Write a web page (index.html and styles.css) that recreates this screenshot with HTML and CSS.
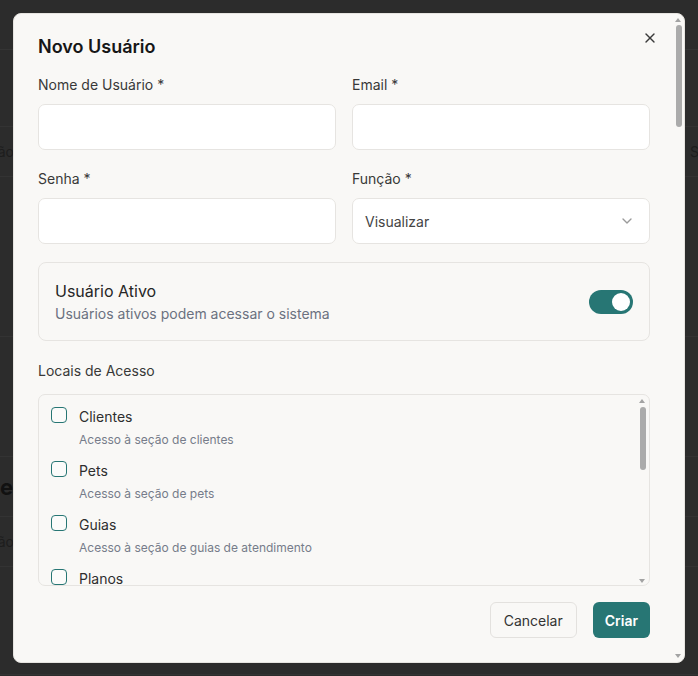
FILE: index.html
```html
<!DOCTYPE html>
<html lang="pt-BR">
<head>
<meta charset="utf-8">
<title>Novo Usuário</title>
<link rel="stylesheet" href="styles.css">
</head>
<body>
<div class="page">
  <div class="page-top"></div>
  <div class="page-row r1"></div>
  <div class="page-row r2"><span class="peek">Função</span><span class="peek-right">S</span></div>
  <div class="page-row r3"></div>
  <div class="page-row r4"></div>
  <div class="page-row r5"><span class="peek big">Controle</span></div>
  <div class="page-row r6"><span class="peek">Função</span></div>
  <div class="page-row r7"></div>
</div>
<div class="dialog" role="dialog" aria-labelledby="dlg-title">
  <div class="fake-scroll" aria-hidden="true">
    <span class="arrow up"></span>
    <span class="thumb dialog-thumb"></span>
    <span class="arrow down"></span>
  </div>
  <button class="close" aria-label="Fechar">
    <svg width="16" height="16" viewBox="0 0 24 24" fill="none" stroke="currentColor" stroke-width="2" stroke-linecap="round" stroke-linejoin="round"><path d="M18 6 6 18"/><path d="m6 6 12 12"/></svg>
  </button>
  <h2 class="title" id="dlg-title">Novo Usuário</h2>
  <div class="grid">
    <div class="field">
      <label class="label">Nome de Usuário *</label>
      <input class="input" type="text">
    </div>
    <div class="field">
      <label class="label">Email *</label>
      <input class="input" type="email">
    </div>
    <div class="field">
      <label class="label">Senha *</label>
      <input class="input" type="password">
    </div>
    <div class="field">
      <label class="label">Função *</label>
      <div class="input select">
        <span>Visualizar</span>
        <svg class="chev" width="16" height="16" viewBox="0 0 24 24" fill="none" stroke="currentColor" stroke-width="2" stroke-linecap="round" stroke-linejoin="round"><path d="m6 9 6 6 6-6"/></svg>
      </div>
    </div>
  </div>
  <div class="switch-card">
    <div class="switch-text">
      <div class="switch-title">Usuário Ativo</div>
      <div class="switch-sub">Usuários ativos podem acessar o sistema</div>
    </div>
    <div class="switch"><span class="knob"></span></div>
  </div>
  <div class="section-label">Locais de Acesso</div>
  <div class="list-wrap">
    <div class="list">
      <div class="item"><span class="box"></span><div><div class="item-name">Clientes</div><div class="item-desc">Acesso à seção de clientes</div></div></div>
      <div class="item"><span class="box"></span><div><div class="item-name">Pets</div><div class="item-desc">Acesso à seção de pets</div></div></div>
      <div class="item"><span class="box"></span><div><div class="item-name">Guias</div><div class="item-desc">Acesso à seção de guias de atendimento</div></div></div>
      <div class="item"><span class="box"></span><div><div class="item-name">Planos</div><div class="item-desc">Acesso à seção de planos</div></div></div>
      <div class="item"><span class="box"></span><div><div class="item-name">Procedimentos</div><div class="item-desc">Acesso à seção de procedimentos</div></div></div>
      <div class="item"><span class="box"></span><div><div class="item-name">Financeiro</div><div class="item-desc">Acesso à seção financeira</div></div></div>
      <div class="item"><span class="box"></span><div><div class="item-name">Agenda</div><div class="item-desc">Acesso à agenda</div></div></div>
      <div class="item"><span class="box"></span><div><div class="item-name">Relatórios</div><div class="item-desc">Acesso à seção de relatórios</div></div></div>
      <div class="item"><span class="box"></span><div><div class="item-name">Usuários</div><div class="item-desc">Acesso à gestão de usuários</div></div></div>
      <div class="item"><span class="box"></span><div><div class="item-name">Configurações</div><div class="item-desc">Acesso às configurações do sistema</div></div></div>
    </div>
    <div class="fake-scroll list-scroll" aria-hidden="true">
      <span class="arrow up"></span>
      <span class="thumb list-thumb"></span>
      <span class="arrow down"></span>
    </div>
  </div>
  <div class="footer">
    <button class="btn btn-outline">Cancelar</button>
    <button class="btn btn-primary">Criar</button>
  </div>
</div>
</body>
</html>
```
FILE: styles.css
```css
* { box-sizing: border-box; }
html, body { margin: 0; height: 100%; }
body {
  background: #2c2c2c;
  font-family: "Inter", "Noto Sans", sans-serif;
  overflow: hidden;
}

/* background page (under the overlay) */
.page { width: 100%; }
.page-top { height: 50px; border-bottom: 1px solid #343434; }
.page-row { border-bottom: 1px solid #333333; display: flex; justify-content: space-between; align-items: center; overflow: hidden; }
.r1 { height: 77px; }
.r2 { height: 50px; }
.r3 { height: 160px; }
.r4 { height: 120px; }
.r5 { height: 60px; }
.r6 { height: 50px; }
.r7 { height: 108px; }
.peek { font-size: 14px; color: #1d1d1d; width: 14px; white-space: nowrap; overflow: hidden; direction: rtl; text-align: left; }
.peek.big { font-size: 22px; font-weight: 700; color: #111; width: 13px; }
.peek-right { font-size: 14px; color: #1d1d1d; width: 8px; overflow: hidden; }

/* dialog */
.dialog {
  position: fixed;
  top: 13px;
  left: 13px;
  width: 672px;
  height: 650px;
  background: #f9f8f6;
  border: 1px solid #e6e4e0;
  border-radius: 8px;
  padding: 24px 34px 24px 24px;
  overflow: hidden;
  display: flex;
  flex-direction: column;
}

.fake-scroll {
  position: absolute;
  top: 0;
  right: 0;
  bottom: 0;
  width: 10px;
  pointer-events: none;
}
.thumb {
  position: absolute;
  right: 2px;
  width: 6px;
  border-radius: 3px;
  background: #ababab;
}
.dialog-thumb { top: 11px; height: 102px; }
.arrow {
  position: absolute;
  left: 1px;
  width: 0;
  height: 0;
  border-left: 3.5px solid transparent;
  border-right: 3.5px solid transparent;
}
.arrow.up { top: 4px; border-bottom: 4px solid #a3a3a3; }
.arrow.down { bottom: 4px; border-top: 4px solid #a3a3a3; }

.close {
  position: absolute;
  top: 16px;
  right: 26px;
  width: 16px;
  height: 16px;
  padding: 0;
  border: 0;
  background: none;
  color: #3a3a3a;
  display: flex;
  cursor: pointer;
}
.title {
  margin: 0;
  font-size: 18px;
  line-height: 18px;
  font-weight: 600;
  color: #161616;
}
.grid {
  margin-top: 19px;
  display: grid;
  grid-template-columns: 1fr 1fr;
  column-gap: 16px;
  row-gap: 19px;
}
.field { display: flex; flex-direction: column; }
.label {
  font-size: 14px;
  line-height: 20px;
  font-weight: 400;
  color: #383838;
  margin-bottom: 9px;
}
.input {
  height: 46px;
  background: #ffffff;
  border: 1px solid #e6e4e1;
  border-radius: 7px;
  padding: 0 12px;
  font: inherit;
  font-size: 14px;
  outline: none;
  width: 100%;
}
.select {
  display: flex;
  align-items: center;
  justify-content: space-between;
  color: #444444;
  padding: 0 14px 0 12px;
}
.chev { color: #9a9a9a; }

.switch-card {
  margin-top: 18px;
  border: 1px solid #e6e4e1;
  border-radius: 8px;
  padding: 16px;
  display: flex;
  align-items: center;
  justify-content: space-between;
}
.switch-title { font-size: 16px; line-height: 24px; font-weight: 400; color: #262626; }
.switch-sub { margin-top: 1px; font-size: 14px; line-height: 20px; color: #6b7180; }
.switch {
  width: 44px;
  height: 24px;
  border-radius: 12px;
  background: #277674;
  padding: 3px;
  display: flex;
  justify-content: flex-end;
}
.knob { width: 18px; height: 18px; border-radius: 50%; background: #ffffff; }

.section-label {
  margin-top: 20px;
  font-size: 14px;
  line-height: 20px;
  font-weight: 400;
  color: #383838;
}
.list-wrap {
  position: relative;
  margin-top: 13px;
  height: 192px;
  flex-shrink: 0;
  border: 1px solid #e6e4e1;
  border-radius: 7px;
  overflow: hidden;
}
.list {
  height: 100%;
  padding: 12px 22px 12px 12px;
  overflow: hidden;
  display: flex;
  flex-direction: column;
  gap: 13px;
}
.list-scroll { width: 10px; right: 1px; }
.list-scroll .arrow.up { top: 4px; }
.list-scroll .arrow.down { bottom: 2px; }
.list-thumb { top: 12px; height: 63px; }
.item { display: flex; align-items: flex-start; gap: 12px; flex-shrink: 0; }
.box {
  width: 16px;
  height: 16px;
  flex-shrink: 0;
  border: 1.5px solid #277674;
  border-radius: 4px;
  background: #fbfbfa;
}
.item-name { font-size: 14px; line-height: 20px; color: #2e2e2e; }
.item-desc { margin-top: 5px; font-size: 12px; line-height: 16px; color: #767c8a; }

.footer {
  margin-top: 16px;
  display: flex;
  justify-content: flex-end;
  gap: 16px;
}
.btn {
  height: 36px;
  border-radius: 6px;
  font-family: inherit;
  font-size: 14px;
  padding: 0 13px;
  cursor: pointer;
}
.btn-outline {
  background: #f9f8f6;
  border: 1px solid #e3e1de;
  color: #333333;
}
.btn-primary {
  background: #277674;
  border: 0;
  color: #ffffff;
  font-weight: 600;
  padding: 0 12px;
}
```
